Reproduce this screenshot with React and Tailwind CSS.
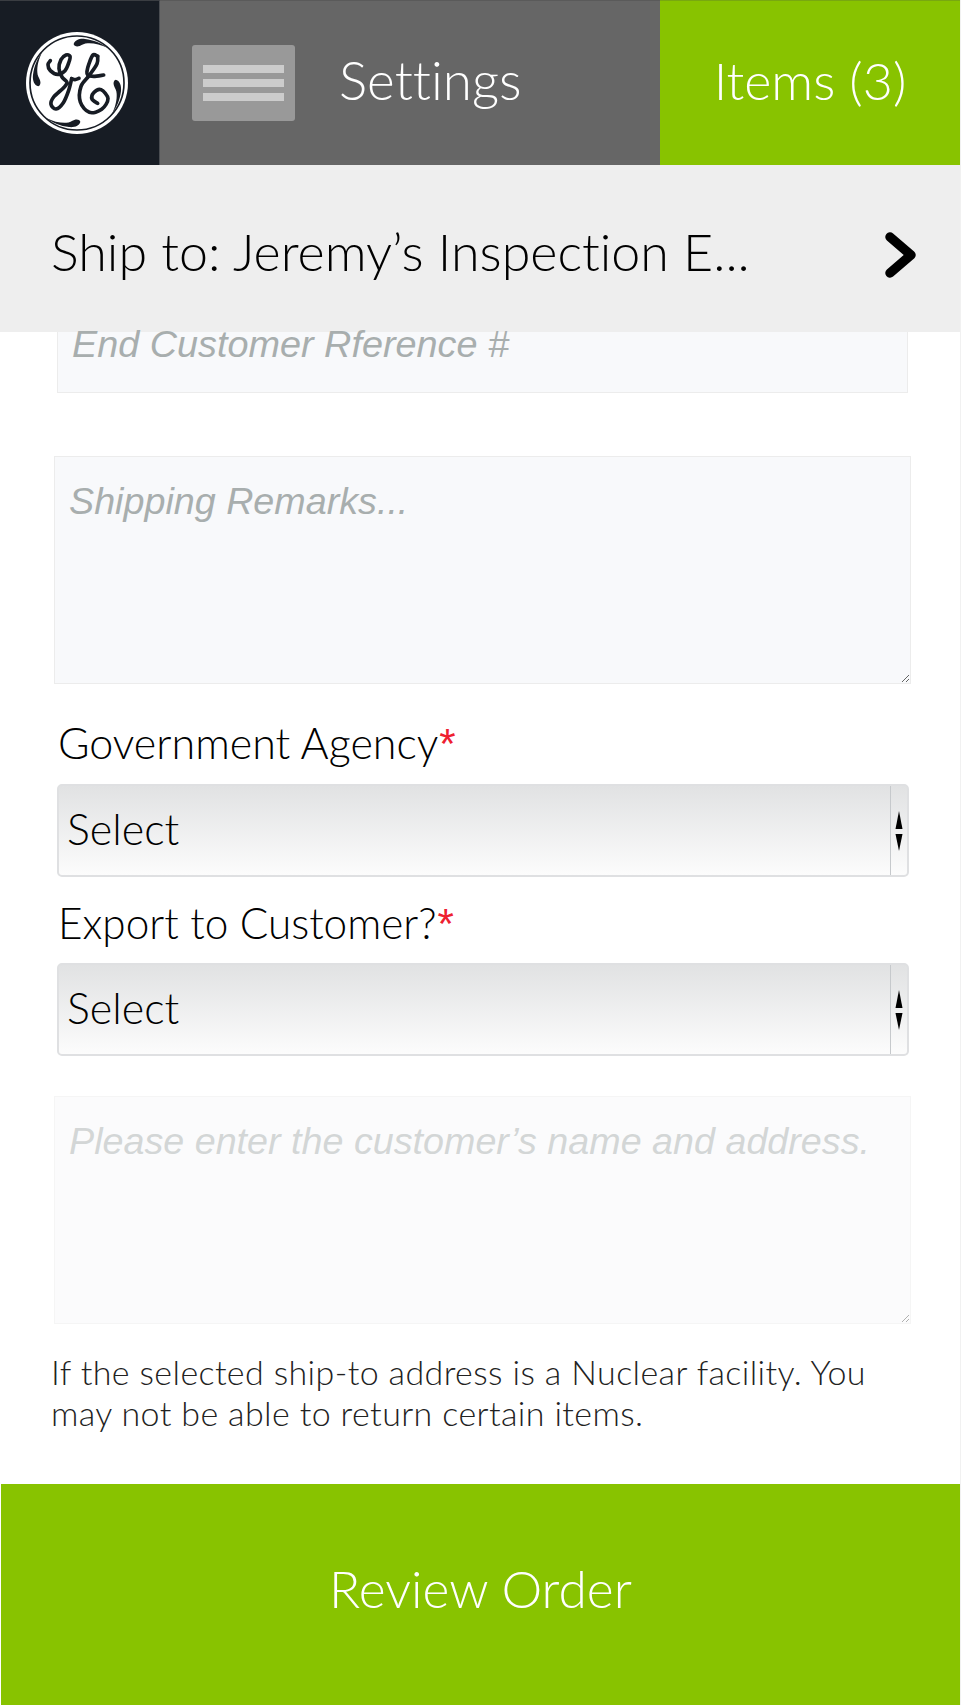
import React from "react";

const sans = "font-['Lato','Noto_Sans',sans-serif] [font-variant-ligatures:none]";
const mono = "font-['Liberation_Sans',sans-serif]";

function spline(pts) {
  let d = `M${pts[0][0]} ${pts[0][1]}`;
  for (let i = 0; i < pts.length - 1; i++) {
    const p0 = pts[i - 1] || pts[i];
    const p1 = pts[i];
    const p2 = pts[i + 1];
    const p3 = pts[i + 2] || p2;
    const c1x = p1[0] + (p2[0] - p0[0]) / 6;
    const c1y = p1[1] + (p2[1] - p0[1]) / 6;
    const c2x = p2[0] - (p3[0] - p1[0]) / 6;
    const c2y = p2[1] - (p3[1] - p1[1]) / 6;
    d += `C${c1x} ${c1y} ${c2x} ${c2y} ${p2[0]} ${p2[1]}`;
  }
  return d;
}

const gStroke = spline([[120, 133], [113, 145], [120, 163], [142, 174], [164, 163], [176, 137], [179, 120], [167, 116], [152, 130], [146, 157], [155, 182], [170, 198], [160, 214], [130, 242], [122, 264], [137, 278], [159, 259], [175, 222], [184, 187]]);
const gBar = spline([[184, 187], [194, 190], [206, 186]]);
const eTop = spline([[262, 120], [248, 116], [236, 142], [230, 165], [232, 176], [250, 180], [280, 176]]);
const eTop2 = spline([[262, 120], [260, 142], [237, 177], [212, 210], [210, 257], [237, 288], [274, 279], [293, 247], [272, 220], [250, 229], [245, 248], [262, 261]]);

function GELogo() {
  return (
    <svg viewBox="47 47 306 306" className="w-[102px] h-[102px]">
      <circle cx="200" cy="200" r="153" fill="#fff" />
      <circle cx="200" cy="200" r="141" fill="none" stroke="#171c24" strokeWidth="5" />
      <g fill="#171c24">
        <path d="M190 84c2-12 18-18 34-16 26 3 48 12 70 28-24-12-44-16-62-15-10 0-16 5-24 8-8 3-16 1-18-5z" />
        <path d="M84 210c-12-2-18-18-16-34 3-26 12-48 28-70-12 24-16 44-15 62 0 10 5 16 8 24 3 8 1 16-5 18z" />
        <path d="M210 316c-2 12-18 18-34 16-26-3-48-12-70-28 24 12 44 16 62 15 10 0 16-5 24-8 8-3 16-1 18 5z" />
        <path d="M316 190c12 2 18 18 16 34-3 26-12 48-28 70 12-24 16-44 15-62 0-10-5-16-8-24-3-8-1-16 5-18z" />
      </g>
      <g fill="none" stroke="#171c24" strokeWidth="11" strokeLinecap="round" strokeLinejoin="round">
        <path d={gStroke} />
        <path d={gBar} />
        <path d={eTop} />
        <path d={eTop2} />
      </g>
    </svg>
  );
}

function UpDown() {
  return (
    <svg viewBox="0 0 8 40" className="w-[8px] h-[40px]" fill="#000">
      <path d="M4 0 L7.5 18 L0.5 18 Z" />
      <path d="M0.5 23 L7.5 23 L4 40 Z" />
    </svg>
  );
}

function SelectBox() {
  return (
    <div className="ml-[57px] w-[852px] h-[93px] flex items-stretch rounded-[5px] border-2 border-[#dfe0e2] bg-gradient-to-b from-[#e1e2e3] to-[#fcfcfc]">
      <div className={`flex-1 flex items-center pl-[8px] pb-[2px] text-[43px] font-light text-black ${sans}`}>Select</div>
      <div className="w-[17px] border-l border-[#c6c9cc] flex items-center justify-center pr-[1px]">
        <UpDown />
      </div>
    </div>
  );
}

export default function App() {
  return (
    <div className={`w-[961px] h-[1705px] bg-white border-r border-[#f1f1f1] flex flex-col overflow-hidden ${sans}`}>
      <header className="h-[165px] flex shrink-0">
        <div className="w-[160px] bg-[#171c24] border-t border-[#3a3d42] flex items-center justify-center pr-[6px] border-r border-r-[#4a4d52]">
          <GELogo />
        </div>
        <div className="w-[500px] bg-[#666666] border-t border-[#5a5a5a] flex items-center pl-[32px]">
          <div className="w-[103px] h-[76px] bg-[#999999] rounded-[3px] flex flex-col items-center justify-center gap-[6px]">
            <div className="w-[81px] h-[8px] bg-[#cccccc]" />
            <div className="w-[81px] h-[8px] bg-[#cccccc]" />
            <div className="w-[81px] h-[8px] bg-[#cccccc]" />
          </div>
          <span className="ml-[44px] pb-[6px] text-[53px] font-light text-white">Settings</span>
        </div>
        <div className="flex-1 bg-[#88c300] border-t border-[#78a810] flex items-center justify-center pb-[6px] text-[52px] font-light text-white">
          Items (3)
        </div>
      </header>

      <div className="h-[167px] shrink-0 bg-[#eeeeee] flex items-center justify-between pl-[51px] pr-[43px]">
        <span className="pt-[4px] text-[52px] font-light text-black">Ship to: Jeremy’s Inspection E...</span>
        <svg viewBox="0 0 32 46" className="mt-[13px] w-[32px] h-[46px]">
          <path d="M5 5 L26 23 L5 41" fill="none" stroke="#000" strokeWidth="9.5" strokeLinecap="round" strokeLinejoin="round" />
        </svg>
      </div>

      <div className={`ml-[57px] w-[851px] h-[61px] shrink-0 bg-[#f8f9fb] border border-t-0 border-[#ececec] flex items-center pl-[14px] pb-[36px] text-[37.8px] italic text-[#a8aeae] ${mono}`}>
        End Customer Rference #
      </div>

      <textarea
        readOnly
        placeholder="Shipping Remarks..."
        className={`mt-[63px] ml-[54px] w-[857px] h-[228px] shrink-0 bg-[#f8f9fb] border border-[#ececec] px-[14px] py-[22px] text-[37.7px] leading-[44px] italic placeholder:text-[#a8aeae] outline-none ${mono}`}
      />

      <div className="mt-[34px] ml-[58px] h-[50px] flex items-center text-[43px] font-light text-black">
        Government Agency<span className={`text-[#ee2030] text-[42px] ml-px ${mono}`}>*</span>
      </div>
      <div className="mt-[16px]"><SelectBox /></div>

      <div className="mt-[21px] ml-[58px] h-[50px] flex items-center text-[42.3px] font-light text-black">
        Export to Customer?<span className={`text-[#ee2030] text-[42px] ml-px ${mono}`}>*</span>
      </div>
      <div className="mt-[15px]"><SelectBox /></div>

      <textarea
        readOnly
        placeholder="Please enter the customer’s name and address."
        className={`mt-[40px] ml-[54px] w-[857px] h-[228px] shrink-0 bg-[#f8f9fb] border border-[#ececec] px-[14px] py-[22px] text-[37.7px] leading-[44px] italic placeholder:text-[#a8aeae] outline-none opacity-50 ${mono}`}
      />

      <p className="mt-[27px] ml-[51px] w-[860px] text-[34px] leading-[41px] tracking-[0.38px] font-light text-[#222222]">
        If the selected ship-to address is a Nuclear facility. You<br />may not be able to return certain items.
      </p>

      <div className="mt-[51px] ml-px flex-1 bg-[#88c300] flex items-center justify-center pb-[12px] text-[51.5px] font-light text-white">
        Review Order
      </div>
    </div>
  );
}
